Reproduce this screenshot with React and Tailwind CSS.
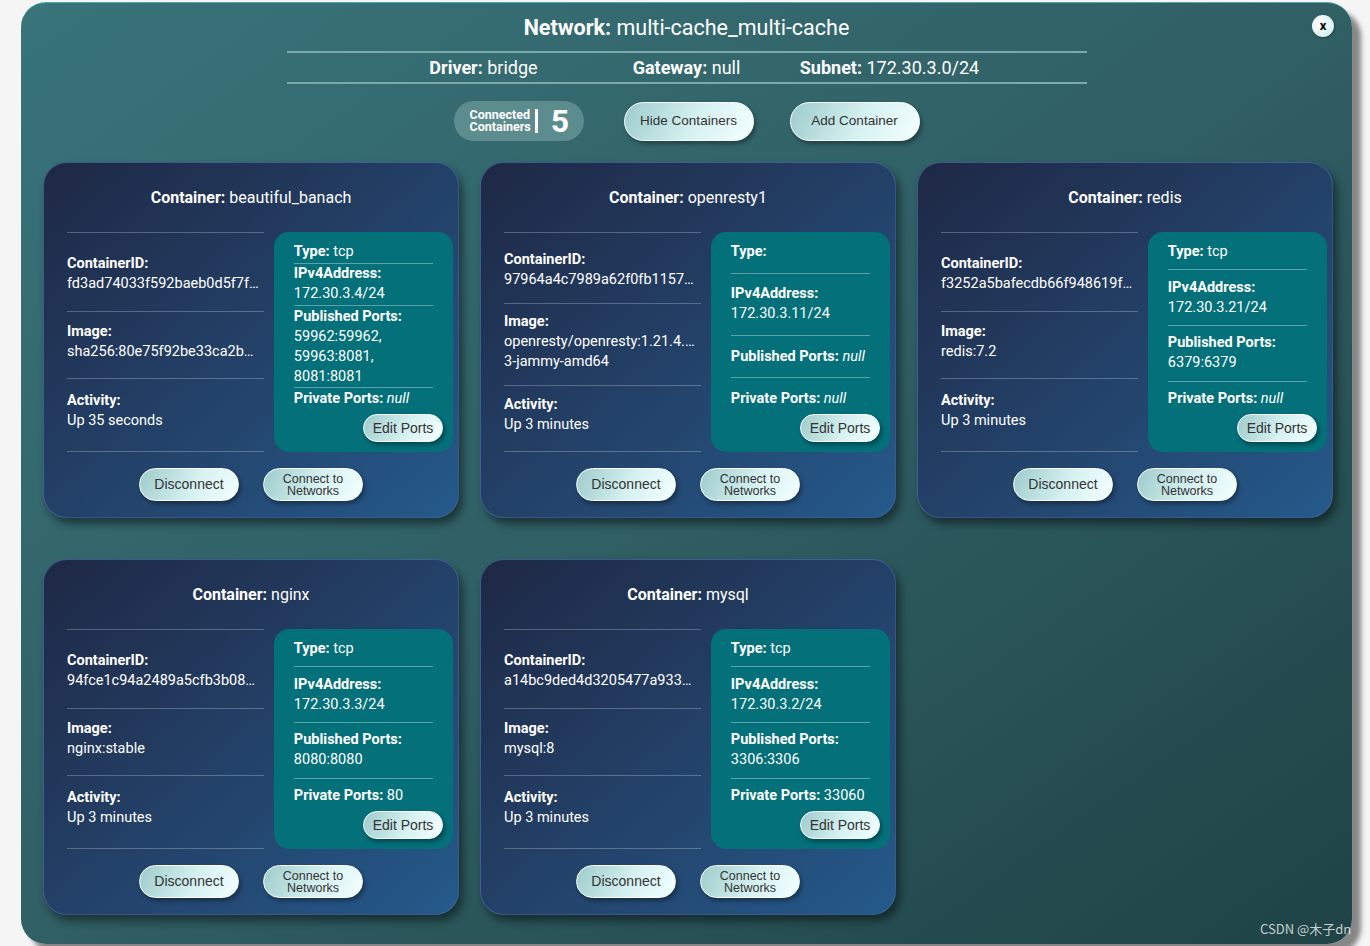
const containers = [
  {
    name: 'beautiful_banach',
    id: 'fd3ad74033f592baeb0d5f7f…',
    image: ['sha256:80e75f92be33ca2b…'],
    activity: 'Up 35 seconds',
    type: 'tcp',
    ip: '172.30.3.4/24',
    published: ['59962:59962,', '59963:8081,', '8081:8081'],
    priv: null,
  },
  {
    name: 'openresty1',
    id: '97964a4c7989a62f0fb1157…',
    image: ['openresty/openresty:1.21.4.…', '3-jammy-amd64'],
    activity: 'Up 3 minutes',
    type: '',
    ip: '172.30.3.11/24',
    published: null,
    priv: null,
  },
  {
    name: 'redis',
    id: 'f3252a5bafecdb66f948619f…',
    image: ['redis:7.2'],
    activity: 'Up 3 minutes',
    type: 'tcp',
    ip: '172.30.3.21/24',
    published: ['6379:6379'],
    priv: null,
  },
  {
    name: 'nginx',
    id: '94fce1c94a2489a5cfb3b08…',
    image: ['nginx:stable'],
    activity: 'Up 3 minutes',
    type: 'tcp',
    ip: '172.30.3.3/24',
    published: ['8080:8080'],
    priv: '80',
  },
  {
    name: 'mysql',
    id: 'a14bc9ded4d3205477a933…',
    image: ['mysql:8'],
    activity: 'Up 3 minutes',
    type: 'tcp',
    ip: '172.30.3.2/24',
    published: ['3306:3306'],
    priv: '33060',
  },
]

const pill =
  "rounded-full border border-white bg-[linear-gradient(115deg,#9ecbcb_0%,#d6f1f1_55%,#f4ffff_100%)] text-[#333] shadow-[2px_3px_4px_rgba(0,0,0,0.35)] font-['Liberation_Sans',Arial,sans-serif]"

const Field = ({ label, lines }) => (
  <div className="shrink-0 text-[14.5px] leading-[20px] text-white">
    <div className="font-bold">{label}</div>
    {lines.map((line) => (
      <div key={line} className="truncate">
        {line}
      </div>
    ))}
  </div>
)

const Rule = () => <div className="h-px shrink-0 bg-white/25" />
const TealRule = () => <div className="h-px shrink-0 bg-white/35" />

const Null = () => <span className="italic">null</span>

const ContainerCard = ({ c }) => (
  <div className="flex h-[356px] flex-col rounded-[24px] border border-[#47659b]/70 bg-gradient-to-br from-[#1e2845] to-[#245a8b] shadow-[4px_6px_8px_rgba(0,0,0,0.45)]">
    <div className="pt-[25px] text-center text-[16px] leading-[20px] text-white">
      <span className="font-bold">Container:</span> {c.name}
    </div>

    <div className="mt-[24px] flex h-[220px] pl-[23px] pr-[5px]">
      <div className="flex w-[198px] flex-col">
        <Rule />
        <div className="grow-[22]" />
        <Field label="ContainerID:" lines={[c.id]} />
        <div className="grow-[17]" />
        <Rule />
        <div className="grow-[11]" />
        <Field label="Image:" lines={c.image} />
        <div className="grow-[16]" />
        <Rule />
        <div className="grow-[12]" />
        <Field label="Activity:" lines={[c.activity]} />
        <div className="grow-[21]" />
        <Rule />
      </div>

      <div className="ml-[10px] flex w-[180px] flex-col rounded-[15px] bg-[#03707a] pb-[10px] pl-[20px] pr-[10px] pt-[10px] text-[14.5px] leading-[20px] text-white">
        <div className="mr-[10px] flex flex-1 flex-col justify-between">
          <div>
            <span className="font-bold">Type:</span> {c.type}
          </div>
          <TealRule />
          <div>
            <div className="font-bold">IPv4Address:</div>
            <div>{c.ip}</div>
          </div>
          <TealRule />
          {c.published ? (
            <div>
              <div className="font-bold">Published Ports:</div>
              {c.published.map((p) => (
                <div key={p}>{p}</div>
              ))}
            </div>
          ) : (
            <div>
              <span className="font-bold">Published Ports:</span> <Null />
            </div>
          )}
          <TealRule />
          <div>
            <span className="font-bold">Private Ports:</span> {c.priv ? c.priv : <Null />}
          </div>
        </div>
        <button className={`${pill} mt-[5px] h-[28px] w-[80px] shrink-0 self-end text-[14px]`}>Edit Ports</button>
      </div>
    </div>

    <div className="mt-[16px] flex justify-center gap-[24px]">
      <button className={`${pill} h-[33px] w-[100px] text-[14px]`}>Disconnect</button>
      <button className={`${pill} flex h-[33px] w-[100px] flex-col items-center justify-center text-[12.5px] leading-[12px]`}>
        <span>Connect to</span>
        <span>Networks</span>
      </button>
    </div>
  </div>
)

export default function App() {
  return (
    <div className="relative h-[946px] w-full overflow-hidden bg-[#f5f5f5] pt-[2px] font-['Roboto','Liberation_Sans',sans-serif]">
      <div className="relative ml-[21px] h-[942px] w-[1331px] rounded-[25px] border-t border-[#52a6ad] bg-gradient-to-br from-[#38747a] via-[#305f64] to-[#1f4346] shadow-[9px_9px_5px_rgba(0,0,0,0.45)]">
        <button className="absolute right-[18px] top-[12px] flex h-[22px] w-[22px] items-center justify-center rounded-full bg-[radial-gradient(circle_at_35%_35%,#ffffff,#c8eaea)] pb-[2px] text-[13px] font-bold leading-none text-black shadow-[1px_1px_2px_rgba(0,0,0,0.35)]">
          x
        </button>

        <div className="pt-[11px] text-center text-[21.5px] leading-[28px] text-white">
          <span className="font-bold">Network:</span> multi-cache_multi-cache
        </div>

        <div className="mx-auto mt-[9px] h-[2px] w-[800px] bg-[#7aaaac]" />
        <div className="mx-auto grid h-[29px] w-[609px] grid-cols-3 items-center text-center text-[18px] leading-[24px] text-white">
          <div>
            <span className="font-bold">Driver:</span> bridge
          </div>
          <div>
            <span className="font-bold">Gateway:</span> null
          </div>
          <div>
            <span className="font-bold">Subnet:</span> 172.30.3.0/24
          </div>
        </div>
        <div className="mx-auto h-[2px] w-[800px] bg-[#7aaaac]" />

        <div className="mt-[17px] flex items-center justify-center">
          <div className="flex h-[40px] w-[130px] items-center rounded-full bg-[#5d8c8e] pl-[16px] text-white">
            <div className="flex flex-col text-[12.5px] font-bold leading-[12.5px]">
              <span>Connected</span>
              <span>Containers</span>
            </div>
            <div className="ml-[4px] h-[24px] w-[3px] bg-white" />
            <div className="ml-[13px] text-[32px] font-bold leading-none">5</div>
          </div>
          <button className={`${pill} ml-[40px] h-[39px] w-[130px] text-[13.5px]`}>Hide Containers</button>
          <button className={`${pill} ml-[36px] h-[39px] w-[130px] text-[13.5px]`}>Add Container</button>
        </div>

        <div className="mt-[21px] grid grid-cols-[repeat(3,416px)] gap-x-[21px] gap-y-[41px] pl-[22px]">
          {containers.map((c) => (
            <ContainerCard key={c.name} c={c} />
          ))}
        </div>
      </div>

      <div className="absolute left-[1260px] top-[920px] font-['Noto_Sans_CJK_SC',sans-serif] text-[13px] leading-[18px] text-white/75">
        CSDN @木子dn
      </div>
    </div>
  )
}
